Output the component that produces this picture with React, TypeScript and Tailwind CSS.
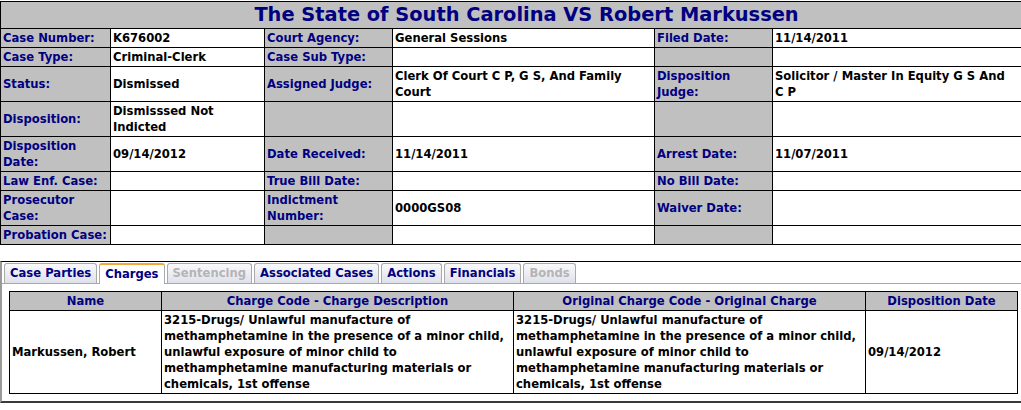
import React from "react";

const L = "bg-[#c0c0c0] text-[#000080] border border-black px-[2px] py-px leading-4 align-middle text-left";
const V = "bg-white text-black border border-black px-[2px] py-px leading-4 align-middle text-left";
const G = "bg-[#c0c0c0] border border-black px-[2px] py-px leading-4";
const W = "bg-white border border-black px-[2px] py-px leading-4";

function Tab({ label, active, disabled }: { label: string; active?: boolean; disabled?: boolean }) {
  if (active) {
    return (
      <div className="h-[21px] -mb-px px-[5px] flex items-center border border-[#aaaaaa] border-b-0 border-t-2 border-t-[#f3a83a] rounded-t-[3px] bg-white text-[#000080] whitespace-nowrap">
        {label}
      </div>
    );
  }
  return (
    <div
      className={
        "h-[20px] px-[5px] flex items-center border border-[#aaaaaa] border-b-0 rounded-t-[3px] bg-gradient-to-b from-[#fafafc] to-[#dfe1ea] whitespace-nowrap " +
        (disabled ? "text-[#b4b4b4]" : "text-[#000080]")
      }
    >
      {label}
    </div>
  );
}

export default function App() {
  return (
    <div
      className="w-[1021px] h-[410px] overflow-hidden bg-white font-bold text-[11.6px] pt-px"
      style={{ fontFamily: '"DejaVu Sans", Verdana, sans-serif' }}
    >
      <table className="table-fixed border-collapse border border-black w-[1052px]">
        <colgroup>
          <col className="w-[110px]" />
          <col className="w-[154px]" />
          <col className="w-[128px]" />
          <col className="w-[262px]" />
          <col className="w-[118px]" />
          <col className="w-[280px]" />
        </colgroup>
        <tbody>
          <tr>
            <td colSpan={6} className="bg-[#c0c0c0] border border-black text-center text-[#000080] text-[19.4px] leading-[24px] py-px">
              The State of South Carolina VS Robert Markussen
            </td>
          </tr>
          <tr>
            <td className={L + " whitespace-nowrap"}>Case Number:</td>
            <td className={V}>K676002</td>
            <td className={L + " whitespace-nowrap"}>Court Agency:</td>
            <td className={V}>General Sessions</td>
            <td className={L + " whitespace-nowrap"}>Filed Date:</td>
            <td className={V}>11/14/2011</td>
          </tr>
          <tr>
            <td className={L + " whitespace-nowrap"}>Case Type:</td>
            <td className={V}>Criminal-Clerk</td>
            <td className={L + " whitespace-nowrap"}>Case Sub Type:</td>
            <td className={W}>&nbsp;</td>
            <td className={G}>&nbsp;</td>
            <td className={W}>&nbsp;</td>
          </tr>
          <tr>
            <td className={L + " whitespace-nowrap"}>Status:</td>
            <td className={V}>Dismissed</td>
            <td className={L + " whitespace-nowrap"}>Assigned Judge:</td>
            <td className={V + " whitespace-nowrap"}>
              Clerk Of Court C P, G S, And Family<br />Court
            </td>
            <td className={L}>
              Disposition<br />Judge:
            </td>
            <td className={V + " whitespace-nowrap"}>
              Solicitor / Master In Equity G S And<br />C P
            </td>
          </tr>
          <tr>
            <td className={L + " whitespace-nowrap"}>Disposition:</td>
            <td className={V}>
              Dismisssed Not<br />Indicted
            </td>
            <td className={G}>&nbsp;</td>
            <td className={W}>&nbsp;</td>
            <td className={G}>&nbsp;</td>
            <td className={W}>&nbsp;</td>
          </tr>
          <tr>
            <td className={L}>
              Disposition<br />Date:
            </td>
            <td className={V}>09/14/2012</td>
            <td className={L + " whitespace-nowrap"}>Date Received:</td>
            <td className={V}>11/14/2011</td>
            <td className={L + " whitespace-nowrap"}>Arrest Date:</td>
            <td className={V}>11/07/2011</td>
          </tr>
          <tr>
            <td className={L + " whitespace-nowrap"}>Law Enf. Case:</td>
            <td className={W}>&nbsp;</td>
            <td className={L + " whitespace-nowrap"}>True Bill Date:</td>
            <td className={W}>&nbsp;</td>
            <td className={L + " whitespace-nowrap"}>No Bill Date:</td>
            <td className={W}>&nbsp;</td>
          </tr>
          <tr>
            <td className={L}>
              Prosecutor<br />Case:
            </td>
            <td className={W}>&nbsp;</td>
            <td className={L}>
              Indictment<br />Number:
            </td>
            <td className={V}>0000GS08</td>
            <td className={L + " whitespace-nowrap"}>Waiver Date:</td>
            <td className={W}>&nbsp;</td>
          </tr>
          <tr>
            <td className={L + " whitespace-nowrap"}>Probation Case:</td>
            <td className={W}>&nbsp;</td>
            <td className={G}>&nbsp;</td>
            <td className={W}>&nbsp;</td>
            <td className={G}>&nbsp;</td>
            <td className={W}>&nbsp;</td>
          </tr>
        </tbody>
      </table>

      <div className="mt-4 w-[1030px] border-t border-t-black border-l-2 border-l-[#9a9a9a] border-b-2 border-b-[#3a3a3a] pb-[7px]">
        <div className="flex items-end gap-[2px] pl-[2px] pt-[1px] border-b border-[#a8a8a8]">
          <Tab label="Case Parties" />
          <Tab label="Charges" active />
          <Tab label="Sentencing" disabled />
          <Tab label="Associated Cases" />
          <Tab label="Actions" />
          <Tab label="Financials" />
          <Tab label="Bonds" disabled />
        </div>
        <div className="pl-[7px] pt-[7px]">
          <table className="table-fixed border-collapse border border-black w-[1008px]">
            <colgroup>
              <col className="w-[152px]" />
              <col className="w-[352px]" />
              <col className="w-[352px]" />
              <col className="w-[152px]" />
            </colgroup>
            <thead>
              <tr>
                <th className="bg-[#c0c0c0] text-[#000080] border border-black px-[2px] py-px leading-4 text-center font-bold">Name</th>
                <th className="bg-[#c0c0c0] text-[#000080] border border-black px-[2px] py-px leading-4 text-center font-bold">Charge Code - Charge Description</th>
                <th className="bg-[#c0c0c0] text-[#000080] border border-black px-[2px] py-px leading-4 text-center font-bold">Original Charge Code - Original Charge</th>
                <th className="bg-[#c0c0c0] text-[#000080] border border-black px-[2px] py-px leading-4 text-center font-bold">Disposition Date</th>
              </tr>
            </thead>
            <tbody>
              <tr>
                <td className={V}>Markussen, Robert</td>
                <td className={V + " whitespace-nowrap"}>
                  3215-Drugs/ Unlawful manufacture of<br />
                  methamphetamine in the presence of a minor child,<br />
                  unlawful exposure of minor child to<br />
                  methamphetamine manufacturing materials or<br />
                  chemicals, 1st offense
                </td>
                <td className={V + " whitespace-nowrap"}>
                  3215-Drugs/ Unlawful manufacture of<br />
                  methamphetamine in the presence of a minor child,<br />
                  unlawful exposure of minor child to<br />
                  methamphetamine manufacturing materials or<br />
                  chemicals, 1st offense
                </td>
                <td className={V}>09/14/2012</td>
              </tr>
            </tbody>
          </table>
        </div>
      </div>
    </div>
  );
}
